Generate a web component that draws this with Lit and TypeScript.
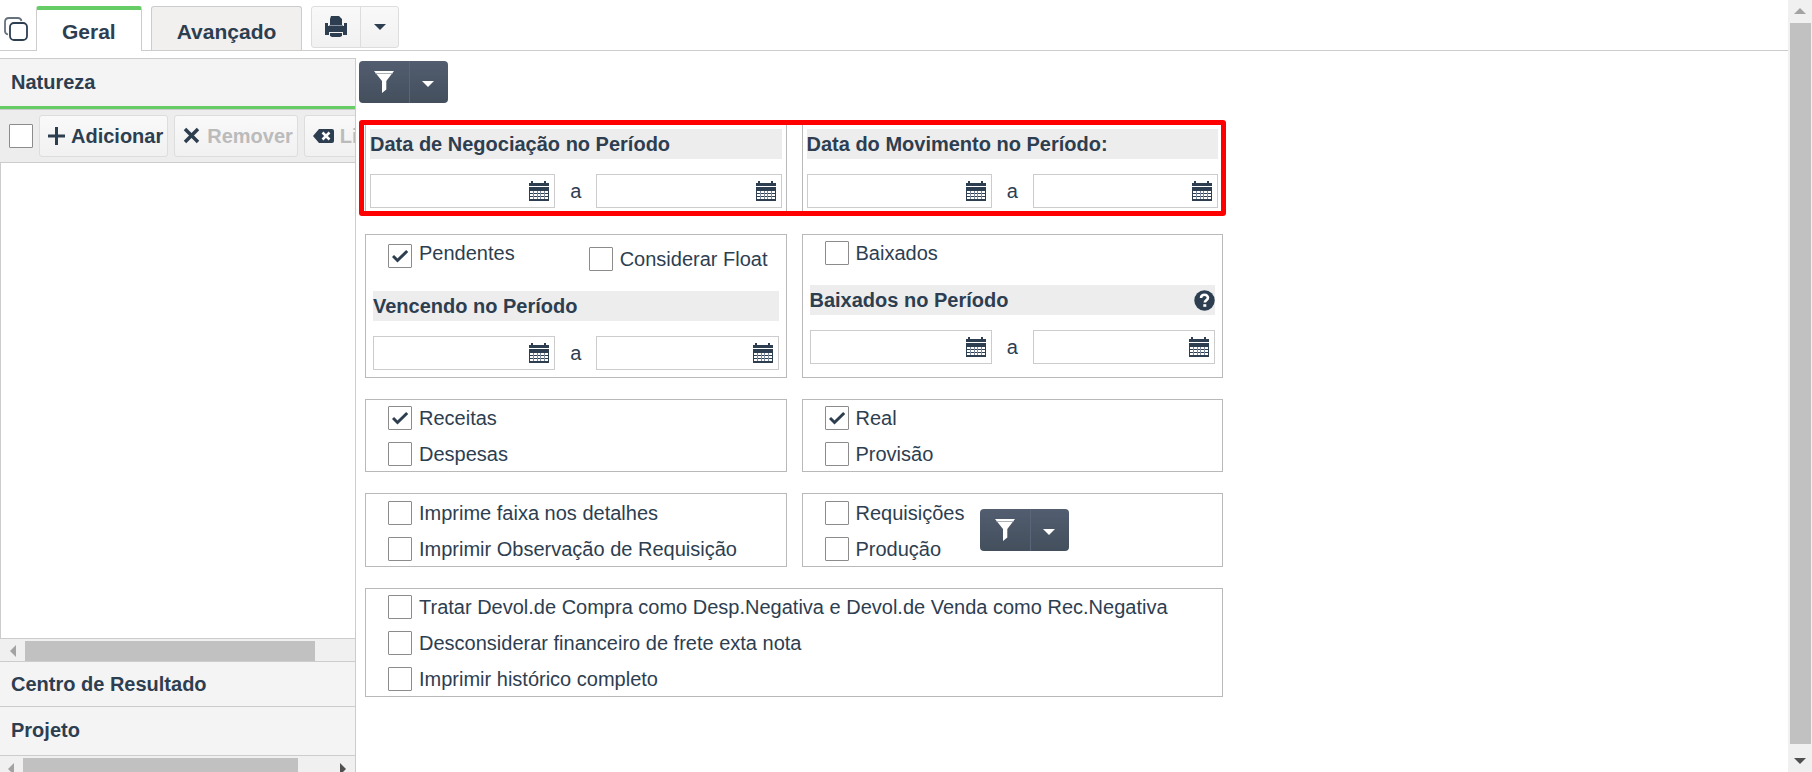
import { LitElement, html, css, svg, nothing } from "lit";
import { customElement, property } from "lit/decorators.js";

const arrow = (d: string) => html`<svg width="12" height="12" viewBox="0 0 12 12">${svg`<path d=${d} fill="currentColor"/>`}</svg>`;
const ARROW_LEFT = "M9 0v12L3 6z";
const ARROW_RIGHT = "M3 0v12l6-6z";
const ARROW_UP = "M0 9h12L6 3z";
const ARROW_DOWN = "M0 3h12l-6 6z";

const caret = html`<svg width="12" height="6" viewBox="0 0 12 6"><path d="M0 0h12L6 6z" fill="currentColor"/></svg>`;

@customElement("scroll-strip")
class ScrollStrip extends LitElement {
  @property({ type: Boolean, reflect: true }) vertical = false;
  @property({ type: Boolean }) end = false;
  @property({ type: Number }) extent = 80;
  static styles = css`
    :host { display: flex; align-items: center; box-sizing: border-box; background: #f0f0f0; color: #a3a3a3; padding-left: 5px; gap: 6px; }
    :host([vertical]) { flex-direction: column; padding: 5px 0; gap: 6px; }
    svg { display: block; flex: none; }
    .track { flex: 1; align-self: stretch; display: flex; min-height: 0; }
    :host([vertical]) .track { flex-direction: column; padding: 0 1px 0 2px; }
    .thumb { background: #c1c1c1; }
    .last { color: #505050; display: flex; padding: 0 6px; }
    :host([vertical]) .last { padding: 5px 0 0; }
  `;
  render() {
    const size = this.vertical ? `height:${this.extent}%` : `width:${this.extent}%`;
    return html`${arrow(this.vertical ? ARROW_UP : ARROW_LEFT)}
      <div class="track"><div class="thumb" style=${size}></div></div>
      ${this.end ? html`<div class="last">${arrow(this.vertical ? ARROW_DOWN : ARROW_RIGHT)}</div>` : nothing}`;
  }
}

@customElement("filter-button")
class FilterButton extends LitElement {
  static styles = css`
    :host { display: inline-flex; height: 42px; border-radius: 4px; overflow: hidden; background: linear-gradient(#525e70, #434f5c); }
    button { border: 0; background: none; color: #fff; padding: 0; display: flex; align-items: center; justify-content: center; }
    .main { width: 50px; }
    .more { width: 39px; border-left: 1px solid #59667a; padding: 4px 2px 0 0; }
  `;
  render() {
    return html`<button class="main" aria-label="Filtrar">
        <svg width="20" height="22" viewBox="0 0 20 22"><path d="M0 0h20L12.300 10v8.500L8 22V10z" fill="#fff"/><path d="M1.500 2.500h17" stroke="#a9b0ba"/></svg>
      </button><button class="more" aria-label="Mais filtros">${caret}</button>`;
  }
}

@customElement("check-field")
class CheckField extends LitElement {
  @property() label = "";
  @property({ type: Boolean }) checked = false;
  static styles = css`
    :host { display: block; }
    label { display: flex; align-items: center; gap: 7px; line-height: 24px; white-space: nowrap; }
    :host(.raised) label { align-items: flex-start; }
    :host(.raised) span { line-height: 18px; }
    input { appearance: none; box-sizing: border-box; flex: none; width: 24px; height: 24px; margin: 0; border: 1px solid #8c8c8c; border-radius: 1px; background: #fff; }
    .box { display: grid; flex: none; }
    .box > * { grid-area: 1 / 1; }
    svg { align-self: center; justify-self: center; pointer-events: none; }
  `;
  render() {
    return html`<label><div class="box"><input type="checkbox" aria-label=${this.label || "Selecionar todos"} .checked=${this.checked} />
      ${this.checked ? html`<svg width="16" height="14" viewBox="0 0 16 14"><path d="M1 7l4.500 4.500L15.200 2" fill="none" stroke="#2d3e50" stroke-width="3"/></svg>` : nothing}</div>
      ${this.label ? html`<span>${this.label}</span>` : nothing}</label>`;
  }
}

@customElement("date-range")
class DateRange extends LitElement {
  @property() name = "";
  @property({ type: Boolean }) help = false;
  static styles = css`
    :host { display: block; }
    h2 { margin: 0 0 15px; height: 30px; line-height: 30px; background: #ededed; font-size: 20px; font-weight: bold; display: flex; justify-content: space-between; align-items: center; white-space: nowrap; }
    .range { display: grid; grid-template-columns: 1fr 41px 1fr; align-items: center; text-align: center; }
    .field { display: flex; align-items: center; box-sizing: border-box; height: 34px; border: 1px solid #ccc; padding-right: 5px; min-width: 0; background: #fff; }
    input { flex: 1; min-width: 0; height: 30px; border: 0; padding: 0 6px; font: inherit; color: inherit; background: none; outline: none; }
    button { border: 0; padding: 0; background: none; display: flex; color: inherit; }
  `;
  private field(edge: string) {
    return html`<div class="field"><input type="text" aria-label="${this.name} ${edge}" /><button aria-label="Abrir calendário">
      <svg width="20" height="20" viewBox="0 0 20 20"><path d="M0 2h2V0h2v2h11V0h2v2h3v3H0zM0 6h20v14H0z" fill="#2d3e50"/><path d="M1 10h18v2H1zM1 13h18v2H1zM1 16h18v2H1z" fill="#fff"/><path d="M4.500 10v8M8.500 10v8M11.500 10v8M15.500 10v8" stroke="#7d8aa0"/></svg>
    </button></div>`;
  }
  render() {
    return html`<h2>${this.name}${this.help ? html`<button aria-label="Ajuda"><svg width="21" height="21" viewBox="0 0 21 21"><circle cx="10.500" cy="10.500" r="10.200" fill="#2d3e50"/><path d="M7 8C7 5.600 8.500 4.800 10.500 4.800S14 6 14 7.800C14 10.200 10.800 10 10.800 12.600" fill="none" stroke="#fff" stroke-width="2.600"/><path d="M9.300 14.200h3v2.600h-3z" fill="#fff"/></svg></button>` : nothing}</h2>
      <div class="range">${this.field("inicial")}<span>a</span>${this.field("final")}</div>`;
  }
}

@customElement("app-root")
class AppRoot extends LitElement {
  static styles = css`
    :host { display: flex; height: 100vh; overflow: hidden; background: #fff; color: #2d3e50; font: 20px/24px "Liberation Sans", Arial, sans-serif; }
    .page { flex: 1; min-width: 0; display: flex; flex-direction: column; }
    button { font: inherit; color: inherit; padding: 0; }
    .tabs { box-sizing: border-box; height: 51px; flex: none; display: flex; align-items: flex-start; padding: 6px 0 0 4px; border-bottom: 1px solid #ccc; }
    .windows { border: 0; background: none; width: 24px; height: 24px; margin: 11px 8px 0 0; display: flex; }
    .tab { box-sizing: border-box; height: 44px; border: 1px solid #ccc; border-bottom: 0; border-radius: 3px 3px 0 0; background: #f2f0ee; font-size: 21px; font-weight: bold; padding: 6px 25px 0; margin-right: 9px; }
    .tab.active { height: 45px; background: #fff; border-top: 4px solid #66cc66; padding-top: 3px; }
    .print { display: flex; box-sizing: border-box; height: 42px; border: 1px solid #ddd; border-radius: 3px; background: linear-gradient(#f9f9f9, #f1f1f1); }
    .print button { border: 0; background: none; width: 48px; display: flex; align-items: center; justify-content: center; }
    .print .more { width: 38px; border-left: 1px solid #ddd; }
    .body { flex: 1; min-height: 0; display: flex; }
    .side { box-sizing: border-box; flex: 0 0 356px; margin-top: 7px; border: 1px solid #ccc; border-width: 1px 1px 0 0; display: flex; flex-direction: column; overflow: hidden; }
    .head { flex: none; border: 0; background: #f4f4f4; text-align: left; font-weight: bold; padding: 0 11px; height: 45px; border-bottom: 1px solid #ccc; }
    .head.open { height: 50px; padding-bottom: 2px; border-bottom: 3px solid #66cc66; }
    .head.last { height: 49px; padding-bottom: 3px; }
    .tools { flex: none; box-sizing: border-box; height: 54px; display: flex; align-items: center; padding-left: 9px; gap: 6px; background: #ededed; border: 1px solid #ccc; border-width: 1px 0; overflow: hidden; }
    .tool { flex: none; box-sizing: border-box; height: 42px; display: flex; align-items: center; gap: 6px; padding: 0 4px 0 8px; border: 1px solid #ddd; border-radius: 3px; background: linear-gradient(#f9f9f9, #f1f1f1); font-weight: bold; }
    .tool.off span { color: #bbb; }
    .list { flex: 1; border-left: 1px solid #ccc; border-bottom: 1px solid #ccc; }
    .inner { flex: none; height: 23px; padding-top: 2px; border-bottom: 1px solid #ccc; padding-left: 7px; }
    .outer { flex: none; height: 23px; margin-bottom: -7px; padding-top: 2px; }
    .main { flex: 1; min-width: 0; padding: 10px 20px 20px 3px; overflow: hidden; }
    .form { display: grid; grid-template-columns: 1fr 1fr; gap: 21px 15px; max-width: 858px; margin: 17px 0 0 6px; }
    .panel { box-sizing: border-box; border: 1px solid #b9b9b9; min-width: 0; }
    .wide { grid-column: 1 / -1; }
    .marked { display: grid; grid-template-columns: subgrid; position: relative; }
    .marked::after { content: ""; position: absolute; inset: 0 -3px -3px -6px; border: 5px solid #f00; border-radius: 3px; pointer-events: none; }
    .dates { padding: 8px 4px 4px; }
    .due { padding: 0 7px 7px; }
    .options { display: flex; height: 50px; box-sizing: border-box; padding: 6px 15px 0; justify-content: space-between; align-items: flex-start; }
    .options.pair { height: 56px; padding: 0 11px 20px 15px; align-items: flex-end; }
    .pending { padding-bottom: 3px; }
    .checks { padding: 6px 22px 5px; display: grid; gap: 12px; align-content: start; justify-content: start; }
    .low { padding-top: 7px; }
    .split { display: flex; gap: 16px; }
    .stack { display: grid; gap: 12px; }
    .split filter-button { margin-top: 8px; }
    .page-scroll { flex: 0 0 24px; }
  `;
  render() {
    return html`
      <div class="page">
        <nav class="tabs">
          <button class="windows" aria-label="Janelas"><svg width="24" height="24" viewBox="0 0 24 24" fill="none" stroke="#2d3e50" stroke-width="1.800"><path d="M4 17.500C2 17 1 16 1 14V5Q1 1 5 1h9c2 0 3 1 3.500 3" stroke="#66717e"/><rect x="6" y="6" width="17" height="17" rx="4"/></svg></button>
          <button class="tab active">Geral</button>
          <button class="tab">Avançado</button>
          <div class="print">
            <button aria-label="Imprimir"><svg width="22" height="22" viewBox="0 0 22 22"><path d="M6 0h8l3 3v6H5V3zM0 7h3v3h16V7h3v12h-4v-3H4v3H0z" fill="#2d3e50"/><path d="M4 9h14v6H4z" fill="#2d3e50"/><path d="M5 17h12v3l-2 1H7l-2-1z" fill="#2d3e50"/><path d="M4 9.500h14" stroke="#8a94a0"/></svg></button>
            <button class="more" aria-label="Mais opções de impressão">${caret}</button>
          </div>
        </nav>
        <div class="body">
          <aside class="side">
            <button class="head open">Natureza</button>
            <div class="tools">
              <check-field></check-field>
              <button class="tool"><svg width="17" height="18" viewBox="0 0 17 18"><path d="M8.500 0v18M0 9h17" stroke="#2d3e50" stroke-width="3"/></svg><span>Adicionar</span></button>
              <button class="tool off"><svg width="18" height="18" viewBox="0 0 18 18"><path d="M2 2l13 13M15 2L2 15" stroke="#2d3e50" stroke-width="3.500"/></svg><span>Remover</span></button>
              <button class="tool off"><svg width="21" height="16" viewBox="0 0 21 16"><path d="M0 8l6-7h13q2 0 2 2v10q0 2-2 2H6z" fill="#2d3e50"/><path d="M9.500 4.500l7 7M16.500 4.500l-7 7" stroke="#fff" stroke-width="2.500"/></svg><span>Limpar</span></button>
            </div>
            <div class="list"></div>
            <scroll-strip class="inner" .extent=${88}></scroll-strip>
            <button class="head">Centro de Resultado</button>
            <button class="head last">Projeto</button>
            <scroll-strip class="outer" .extent=${91} end></scroll-strip>
          </aside>
          <main class="main">
            <filter-button></filter-button>
            <div class="form">
              <div class="wide marked">
                <section class="panel dates"><date-range name="Data de Negociação no Período"></date-range></section>
                <section class="panel dates"><date-range name="Data do Movimento no Período:"></date-range></section>
              </div>
              <section class="panel due">
                <div class="options pair">
                  <check-field class="raised pending" label="Pendentes" checked></check-field>
                  <check-field label="Considerar Float"></check-field>
                </div>
                <date-range name="Vencendo no Período"></date-range>
              </section>
              <section class="panel due">
                <div class="options"><check-field label="Baixados"></check-field></div>
                <date-range name="Baixados no Período" help></date-range>
              </section>
              <section class="panel checks">
                <check-field label="Receitas" checked></check-field>
                <check-field label="Despesas"></check-field>
              </section>
              <section class="panel checks">
                <check-field label="Real" checked></check-field>
                <check-field label="Provisão"></check-field>
              </section>
              <section class="panel checks low">
                <check-field label="Imprime faixa nos detalhes"></check-field>
                <check-field label="Imprimir Observação de Requisição"></check-field>
              </section>
              <section class="panel checks low split">
                <div class="stack">
                  <check-field label="Requisições"></check-field>
                  <check-field label="Produção"></check-field>
                </div>
                <filter-button></filter-button>
              </section>
              <section class="panel checks wide">
                <check-field label="Tratar Devol.de Compra como Desp.Negativa e Devol.de Venda como Rec.Negativa"></check-field>
                <check-field label="Desconsiderar financeiro de frete exta nota"></check-field>
                <check-field label="Imprimir histórico completo"></check-field>
              </section>
            </div>
          </main>
        </div>
      </div>
      <scroll-strip class="page-scroll" vertical end .extent=${100}></scroll-strip>
    `;
  }
}
